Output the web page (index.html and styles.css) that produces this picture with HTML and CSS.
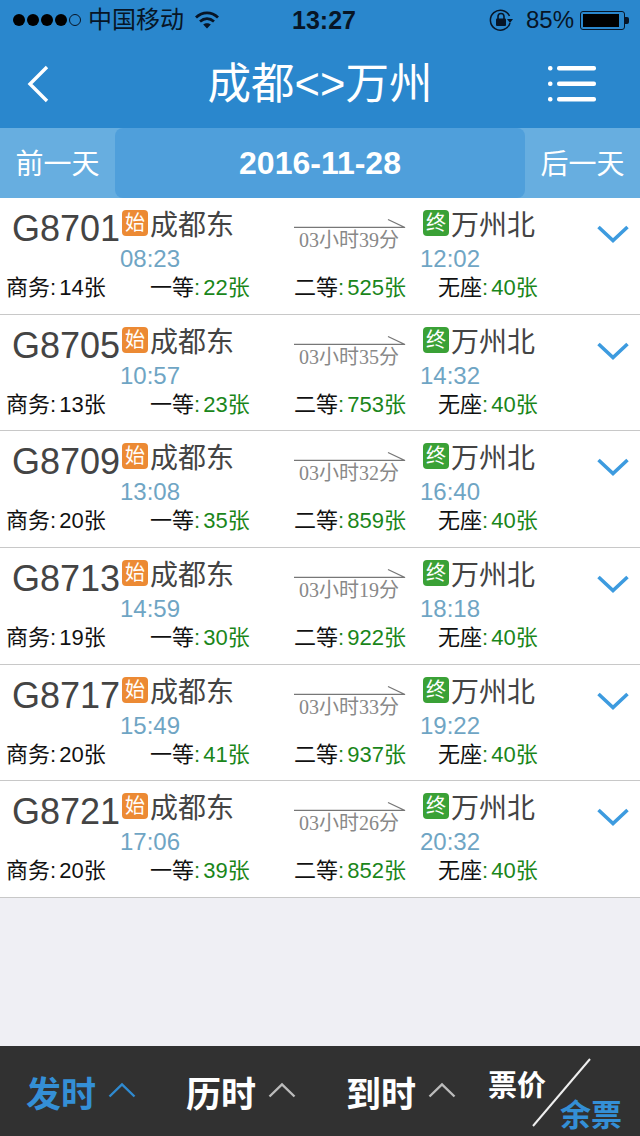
FILE: index.html
```html
<!DOCTYPE html>
<html lang="zh">
<head>
<meta charset="utf-8">
<title>成都&lt;&gt;万州</title>
<link rel="stylesheet" href="styles.css">
</head>
<body>
<svg class="defs" width="0" height="0" aria-hidden="true">
  <symbol id="arrow" viewBox="0 0 112 10"><path d="M0 9.500H111L94 1.500" fill="none" stroke="#777" stroke-width="1.3"/></symbol>
  <symbol id="down" viewBox="0 0 32 18"><path d="M1.500 2L16 15.500L30.500 2" fill="none" stroke="#3d9bdf" stroke-width="3.600"/></symbol>
  <symbol id="up" viewBox="0 0 28 16"><path d="M1.500 14.500L14 2.500L26.500 14.500" fill="none" stroke="currentColor" stroke-width="2.400"/></symbol>
</svg>
<div class="header">
  <div class="status">
    <div class="status-left">
      <div class="signal"><i></i><i></i><i></i><i></i><i class="off"></i></div>
      <span class="carrier">中国移动</span>
      <svg class="wifi" width="24" height="18" viewBox="0 0 24 18"><path d="M1 6.500C7.500 .3 16.500 .3 23 6.500" fill="none" stroke="#071526" stroke-width="2.800"/><path d="M5 10.500C9.300 6.800 14.700 6.800 19 10.500" fill="none" stroke="#071526" stroke-width="2.800"/><path d="M8.200 13.600C10.300 11.800 13.700 11.800 15.800 13.600L12 17.600Z" fill="#071526"/></svg>
    </div>
    <div class="clock">13:27</div>
    <div class="status-right">
      <svg class="lock" width="24" height="24" viewBox="0 0 24 24"><path d="M20.500 8A10 10 0 1 0 21 15" fill="none" stroke="#071526" stroke-width="1.500"/><path d="M18 11H24L21 15Z" fill="#071526"/><rect x="7" y="10.500" width="10" height="7.500" rx="1" fill="#071526"/><path d="M9 11V8.500A3 3 0 0 1 15 8.500V11" fill="none" stroke="#071526" stroke-width="1.600"/></svg>
      <span class="percent">85%</span>
      <div class="battery"><div class="battery-level"></div></div>
      <div class="battery-tip"></div>
    </div>
  </div>
  <div class="nav">
    <svg class="back" width="24" height="38" viewBox="0 0 24 38"><path d="M21 2L4 19L21 36" fill="none" stroke="#fff" stroke-width="3.400"/></svg>
    <h1 class="title">成都&lt;&gt;万州</h1>
    <svg class="menu" width="48" height="36" viewBox="0 0 48 36"><g fill="#fff"><rect x="0" y="0" width="4.500" height="4.500" rx="2"/><rect x="0" y="15.500" width="4.500" height="4.500" rx="2"/><rect x="0" y="31" width="4.500" height="4.500" rx="2"/><rect x="9" y="0" width="39" height="4.500" rx="2"/><rect x="9" y="15.500" width="39" height="4.500" rx="2"/><rect x="9" y="31" width="39" height="4.500" rx="2"/></g></svg>
  </div>
</div>
<div class="tabs">
  <div class="day">前一天</div>
  <div class="date">2016-11-28</div>
  <div class="day">后一天</div>
</div>
<div class="list">
  <div class="row">
    <div class="top">
      <div class="train">G8701</div>
      <div class="station depart"><div class="stop"><span class="badge start">始</span><span class="name">成都东</span></div><div class="time">08:23</div></div>
      <div class="duration"><svg class="arrow"><use href="#arrow"/></svg><div class="hours">03小时39分</div></div>
      <div class="station arrive"><div class="stop"><span class="badge end">终</span><span class="name">万州北</span></div><div class="time">12:02</div></div>
      <svg class="down"><use href="#down"/></svg>
    </div>
    <div class="seats"><div>商务: 14张</div><div>一等<b>: 22张</b></div><div>二等<b>: 525张</b></div><div>无座<b>: 40张</b></div></div>
  </div>
  <div class="row">
    <div class="top">
      <div class="train">G8705</div>
      <div class="station depart"><div class="stop"><span class="badge start">始</span><span class="name">成都东</span></div><div class="time">10:57</div></div>
      <div class="duration"><svg class="arrow"><use href="#arrow"/></svg><div class="hours">03小时35分</div></div>
      <div class="station arrive"><div class="stop"><span class="badge end">终</span><span class="name">万州北</span></div><div class="time">14:32</div></div>
      <svg class="down"><use href="#down"/></svg>
    </div>
    <div class="seats"><div>商务: 13张</div><div>一等<b>: 23张</b></div><div>二等<b>: 753张</b></div><div>无座<b>: 40张</b></div></div>
  </div>
  <div class="row">
    <div class="top">
      <div class="train">G8709</div>
      <div class="station depart"><div class="stop"><span class="badge start">始</span><span class="name">成都东</span></div><div class="time">13:08</div></div>
      <div class="duration"><svg class="arrow"><use href="#arrow"/></svg><div class="hours">03小时32分</div></div>
      <div class="station arrive"><div class="stop"><span class="badge end">终</span><span class="name">万州北</span></div><div class="time">16:40</div></div>
      <svg class="down"><use href="#down"/></svg>
    </div>
    <div class="seats"><div>商务: 20张</div><div>一等<b>: 35张</b></div><div>二等<b>: 859张</b></div><div>无座<b>: 40张</b></div></div>
  </div>
  <div class="row">
    <div class="top">
      <div class="train">G8713</div>
      <div class="station depart"><div class="stop"><span class="badge start">始</span><span class="name">成都东</span></div><div class="time">14:59</div></div>
      <div class="duration"><svg class="arrow"><use href="#arrow"/></svg><div class="hours">03小时19分</div></div>
      <div class="station arrive"><div class="stop"><span class="badge end">终</span><span class="name">万州北</span></div><div class="time">18:18</div></div>
      <svg class="down"><use href="#down"/></svg>
    </div>
    <div class="seats"><div>商务: 19张</div><div>一等<b>: 30张</b></div><div>二等<b>: 922张</b></div><div>无座<b>: 40张</b></div></div>
  </div>
  <div class="row">
    <div class="top">
      <div class="train">G8717</div>
      <div class="station depart"><div class="stop"><span class="badge start">始</span><span class="name">成都东</span></div><div class="time">15:49</div></div>
      <div class="duration"><svg class="arrow"><use href="#arrow"/></svg><div class="hours">03小时33分</div></div>
      <div class="station arrive"><div class="stop"><span class="badge end">终</span><span class="name">万州北</span></div><div class="time">19:22</div></div>
      <svg class="down"><use href="#down"/></svg>
    </div>
    <div class="seats"><div>商务: 20张</div><div>一等<b>: 41张</b></div><div>二等<b>: 937张</b></div><div>无座<b>: 40张</b></div></div>
  </div>
  <div class="row">
    <div class="top">
      <div class="train">G8721</div>
      <div class="station depart"><div class="stop"><span class="badge start">始</span><span class="name">成都东</span></div><div class="time">17:06</div></div>
      <div class="duration"><svg class="arrow"><use href="#arrow"/></svg><div class="hours">03小时26分</div></div>
      <div class="station arrive"><div class="stop"><span class="badge end">终</span><span class="name">万州北</span></div><div class="time">20:32</div></div>
      <svg class="down"><use href="#down"/></svg>
    </div>
    <div class="seats"><div>商务: 20张</div><div>一等<b>: 39张</b></div><div>二等<b>: 852张</b></div><div>无座<b>: 40张</b></div></div>
  </div>
</div>
<div class="spacer"></div>
<div class="sortbar">
  <div class="sort active"><span>发时</span><svg class="up"><use href="#up"/></svg></div>
  <div class="sort"><span>历时</span><svg class="up"><use href="#up"/></svg></div>
  <div class="sort"><span>到时</span><svg class="up"><use href="#up"/></svg></div>
  <div class="split">
    <span class="split-a">票价</span>
    <span class="split-b">余票</span>
    <svg class="slash" width="60" height="70" viewBox="0 0 60 70"><path d="M1 68L58 1" stroke="#eee" stroke-width="2"/></svg>
  </div>
</div>
</body>
</html>
```
FILE: styles.css
```css
* { box-sizing: border-box; }
html, body { margin: 0; padding: 0; }
body {
  width: 640px;
  height: 1136px;
  display: flex;
  flex-direction: column;
  overflow: hidden;
  background: #efeff4;
  font-family: "Liberation Sans", "Noto Sans CJK SC", sans-serif;
}
.defs { position: absolute; }

.header { background: #2a87cd; height: 128px; flex: none; }
.status {
  height: 40px;
  display: grid;
  grid-template-columns: 1fr auto 1fr;
  align-items: center;
  color: #071526;
  padding: 0 11px 0 13px;
}
.status-left, .status-right { display: flex; align-items: center; }
.status-right { justify-content: flex-end; }
.signal { display: flex; gap: 2px; }
.signal i { width: 12px; height: 12px; border-radius: 50%; background: #000; }
.signal i.off { background: none; border: 1px solid #071526; }
.carrier { font-size: 24px; margin-left: 7px; line-height: 40px; }
.wifi { margin-left: 11px; }
.clock { font-size: 25px; font-weight: 700; padding-left: 6px; }
.lock { margin-right: 13px; }
.percent { font-size: 24px; margin-right: 6px; }
.battery {
  width: 45px;
  height: 19px;
  border: 1px solid #071526;
  border-radius: 3px;
  padding: 2px;
}
.battery-level { width: 36px; height: 100%; background: #000; }
.battery-tip { width: 4px; height: 7px; background: #071526; border-radius: 0 2px 2px 0; }

.nav {
  height: 88px;
  display: grid;
  grid-template-columns: 1fr auto 1fr;
  align-items: center;
  padding: 0 44px;
}
.title {
  margin: 0;
  font-size: 43.5px;
  font-weight: 400;
  color: #fff;
  line-height: 88px;
  text-align: center;
}
.back { justify-self: start; margin-left: -18px; }
.menu { justify-self: end; }

.tabs {
  height: 70px;
  flex: none;
  display: flex;
  background: #67aee0;
  color: #fff;
}
.day {
  width: 115px;
  font-size: 28px;
  line-height: 73px;
  text-align: center;
}
.date {
  width: 410px;
  background: #4f9fdb;
  border-radius: 8px;
  font-size: 32px;
  font-weight: 700;
  line-height: 70px;
  text-align: center;
}

.list {
  flex: none;
  display: grid;
  grid-auto-rows: 116.67px;
  background: #fff;
}
.row { border-bottom: 1px solid #c8c8c8; padding-top: 12px; }
.top { display: flex; height: 63px; }
.train {
  width: 121px;
  padding-left: 12px;
  font-size: 36px;
  line-height: 38px;
  color: #444;
  flex: none;
}
.station { flex: none; }
.depart { width: 173px; }
.arrive { width: 176px; }
.stop { display: flex; height: 26px; align-items: center; }
.badge {
  width: 26px;
  height: 26px;
  margin-left: 1px;
  border-radius: 4px;
  color: #fff;
  font-size: 20px;
  line-height: 26px;
  text-align: center;
  flex: none;
}
.start { background: #ec8a34; }
.end { background: #3aa136; margin-left: 2px; }
.name { font-size: 28px; line-height: 30px; color: #444; margin: 6px 0 0 2px; }
.time {
  margin-top: 8px;
  margin-left: -1px;
  font-size: 24px;
  line-height: 30px;
  color: #6fa5c4;
}
.duration { width: 127px; padding-top: 8px; flex: none; }
.arrow { display: block; width: 112px; height: 10px; }
.hours {
  width: 112px;
  margin-top: 2px;
  padding-right: 2px;
  font-family: "Liberation Serif", "Noto Sans CJK SC", serif;
  font-size: 20px;
  line-height: 20px;
  color: #888;
  text-align: center;
}
.down { width: 32px; height: 18px; margin-top: 15px; flex: none; }

.seats {
  display: grid;
  grid-template-columns: repeat(4, 144px);
  padding-left: 6px;
  font-size: 22px;
  line-height: 30px;
  word-spacing: -3px;
  color: #111;
}
.seats b { font-weight: 400; color: #1a861a; }

.spacer { flex: 1; }
.sortbar {
  height: 90px;
  flex: none;
  background: #313131;
  display: flex;
  align-items: center;
  padding-left: 26px;
  color: #fff;
}
.sort {
  width: 160px;
  display: flex;
  align-items: center;
  gap: 12px;
  font-size: 35px;
  font-weight: 700;
  flex: none;
}
.sort .up { width: 28px; height: 16px; color: #bbb; margin-top: -2px; }
.sort.active { color: #348fd6; }
.sort.active .up { color: #2f8ad0; }
.split {
  position: relative;
  width: 140px;
  height: 90px;
  margin-left: -18px;
  font-size: 29px;
  font-weight: 700;
  flex: none;
}
.split-a { position: absolute; left: 0; top: 20px; line-height: 40px; }
.split-b { position: absolute; left: 72px; top: 50px; line-height: 40px; font-size: 31px; color: #348fd6; }
.slash { position: absolute; left: 44px; top: 12px; }
```
